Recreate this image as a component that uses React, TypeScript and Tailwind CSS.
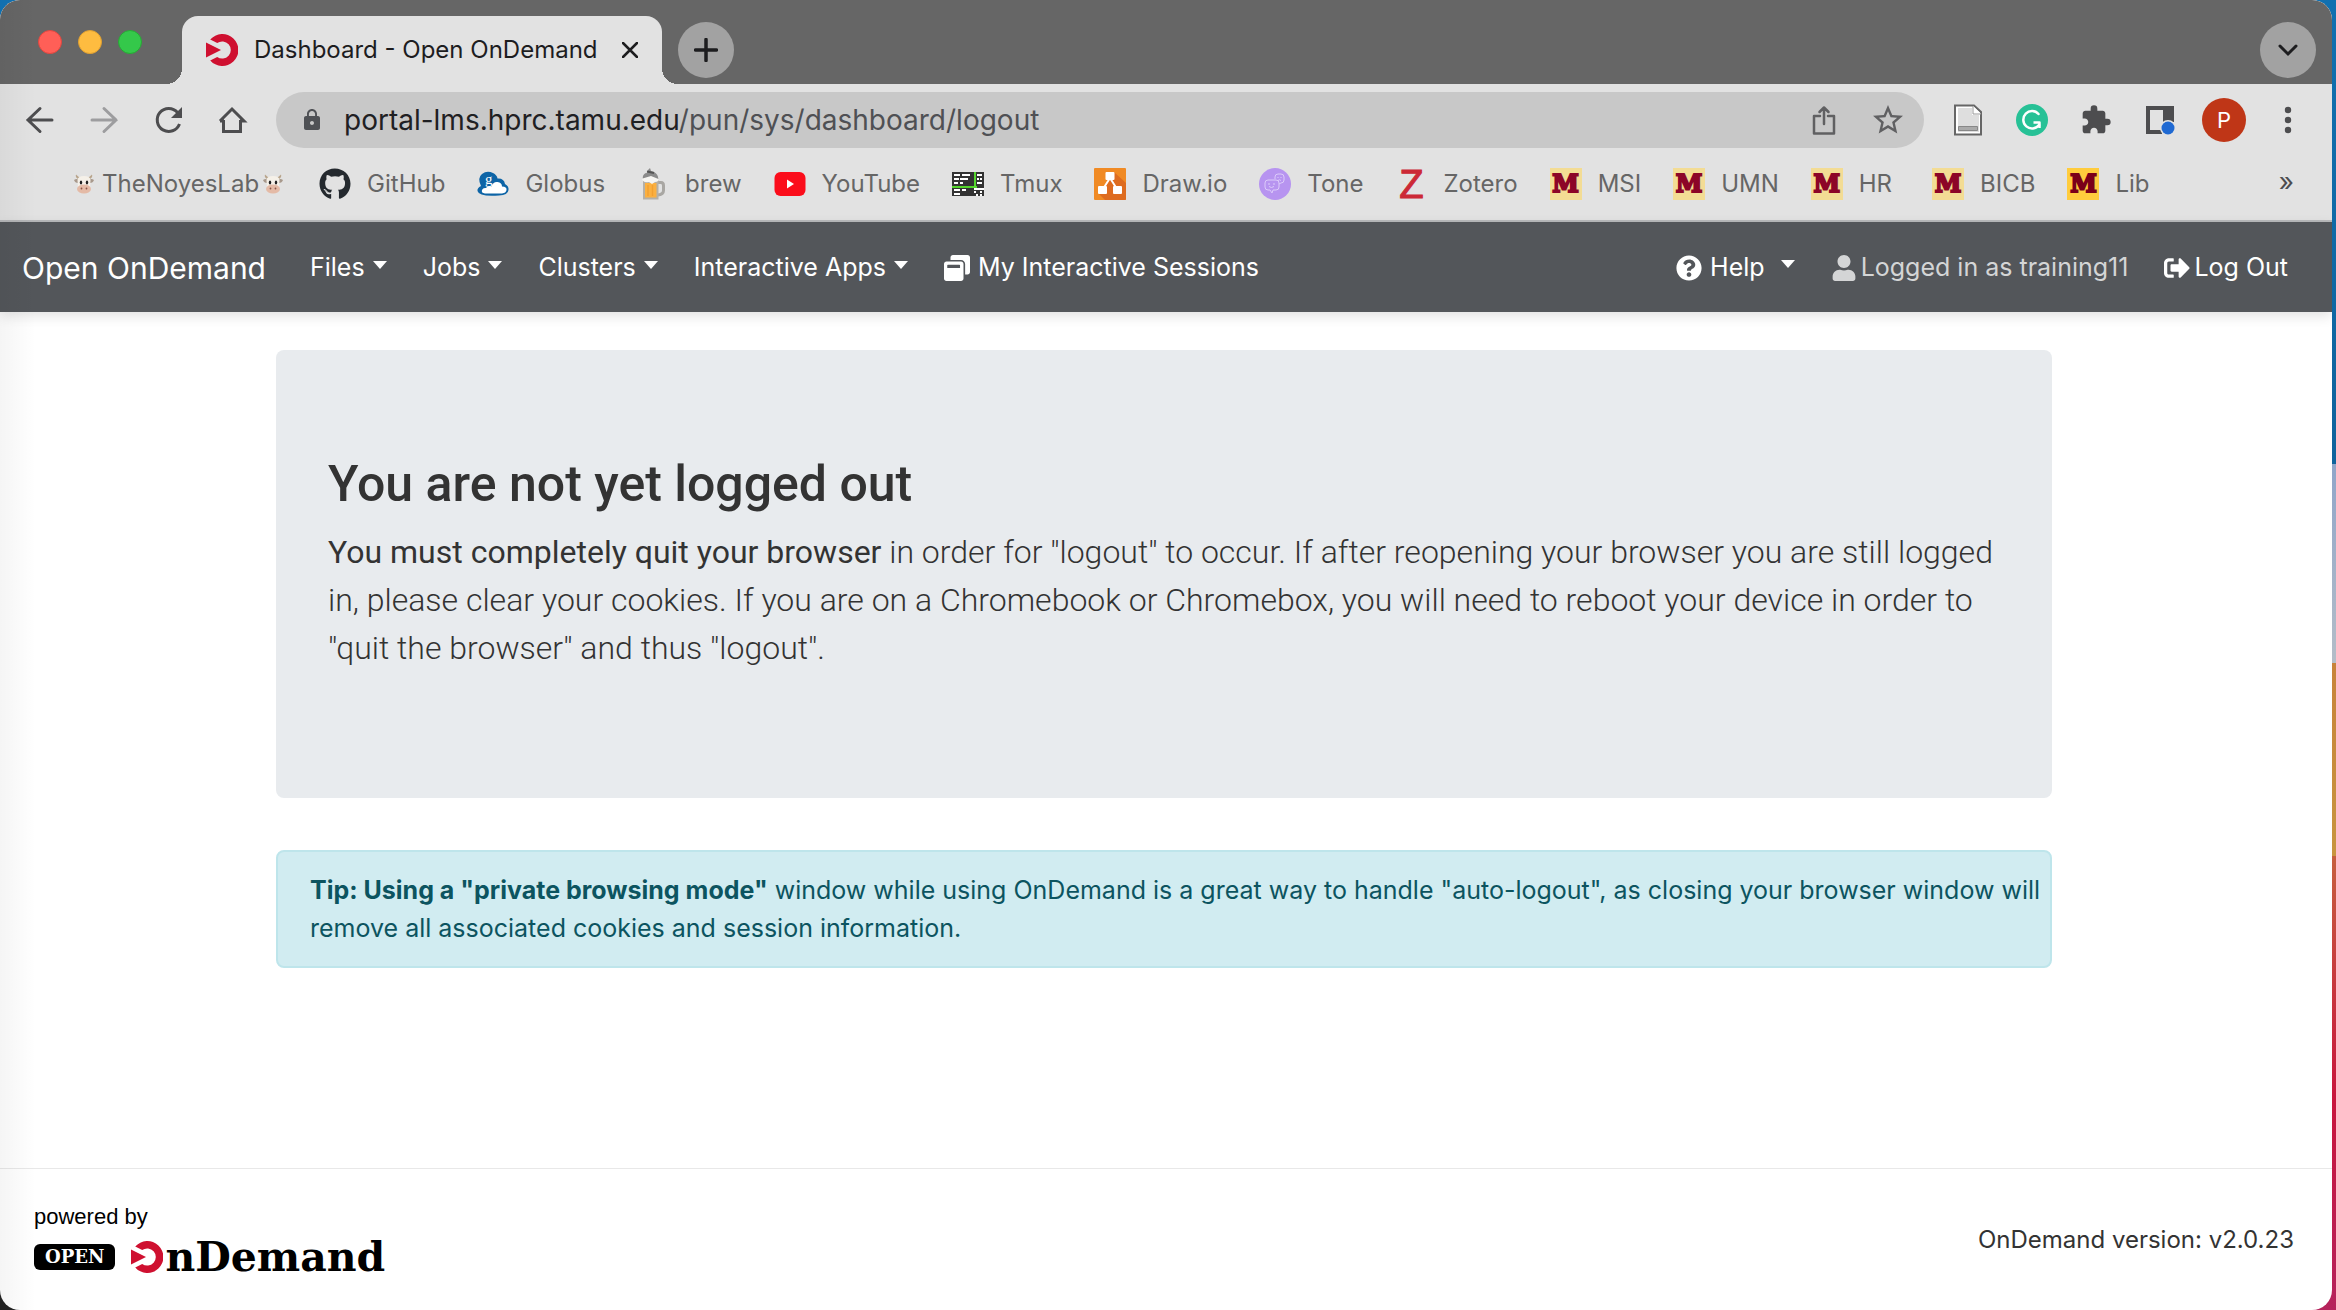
import React from "react";
import { FaGithub, FaQuestionCircle, FaUser, FaSignOutAlt, FaWindowRestore } from "react-icons/fa";
import { MdExtension, MdStarBorder, MdLock } from "react-icons/md";

function OnDemandMark({ className }: { className: string }) {
  return (
    <svg viewBox="0 0 32 32" className={className} aria-hidden="true">
      <path
        d="M4.2 5.6A16 16 0 1 1 4.2 26.4L11.2 23A8.6 8.6 0 1 0 11.2 9Z"
        fill="#cf1030"
      />
      <path d="M0 8.6L15 16L0 23.4Z" fill="#cf1030" />
    </svg>
  );
}

function Cow() {
  return (
    <svg viewBox="0 0 20 20" className="size-5" aria-hidden="true">
      <path d="M4 5Q1 3 2 .5Q4 3 7 3.500ZM16 5Q19 3 18 .5Q16 3 13 3.500Z" fill="#b9a58c" />
      <path d="M0 6Q3 4 5 6L4 9Q1 9 0 6ZM20 6Q17 4 15 6L16 9Q19 9 20 6Z" fill="#a8998c" />
      <path d="M3.500 6Q4 2 10 2Q16 2 16.500 6L16 14H4Z" fill="#f5f0e8" />
      <ellipse cx="10" cy="15" rx="7" ry="4.600" fill="#e4baa6" />
      <ellipse cx="7" cy="8.500" rx="1.200" ry="1.900" fill="#222" />
      <ellipse cx="13" cy="8.500" rx="1.200" ry="1.900" fill="#222" />
      <ellipse cx="7.500" cy="14.500" rx=".9" ry="1.100" fill="#8a5647" />
      <ellipse cx="12.500" cy="14.500" rx=".9" ry="1.100" fill="#8a5647" />
    </svg>
  );
}

function GlobusIcon() {
  return (
    <svg viewBox="0 0 32 32" className="size-8" aria-hidden="true">
      <path
        d="M4 18Q0 10 5 6Q10 2 16 5Q20 7 20.500 10.500Q27 10 28 16Q32 18 31.500 22Q31 27 22 27.500Q2 29 .5 23Q0 20 4 18Z"
        fill="#0d64a6"
      />
      <path
        d="M8 25.500Q4 25 5 22Q6 19.500 9 20Q11 17 14.500 18.500Q16 13.500 20.500 14Q25 14.500 25 18.500Q30 18.500 29.500 22Q29 25 25 25.500Z"
        fill="#fff"
      />
      <text x="8" y="16" fontSize="15" fontFamily="Liberation Serif, serif" fill="#fff">g</text>
    </svg>
  );
}

function BrewIcon() {
  return (
    <svg viewBox="0 0 32 32" className="size-8" aria-hidden="true">
      <path d="M20 14.500h4q2.500 0 2.500 3v5q0 4-6 4.500" fill="none" stroke="#a9a7a3" strokeWidth="3" />
      <path d="M6 10h15.500v21.500H6Z" fill="#b4b0a8" />
      <path d="M8 15h11.500v14.500H8Z" fill="#fbb040" />
      <path d="M11 17v11M15.500 17v11" stroke="#f2a030" strokeWidth="1.500" />
      <path d="M5 10Q6 6 12 6.500Q19 5.500 22 10Q22 14 18 14L15 16L12 14Q5 15 5 10Z" fill="#f6f5f2" />
      <path d="M5.500 10.500Q6 5 10 5L11 2L13 0L14 3L17 4Q21 6 21.500 11L14 8Z" fill="#8b8b8b" />
      <path d="M10 3.500L17 5" stroke="#555" strokeWidth="2" />
    </svg>
  );
}

function YouTubeIcon() {
  return (
    <svg viewBox="0 0 32 32" className="size-8" aria-hidden="true">
      <rect x="0.500" y="4" width="31" height="24" rx="6" fill="#fb0d1b" />
      <path d="M13 11.500L20 16L13 20.500Z" fill="#fff" />
    </svg>
  );
}

function TmuxIcon() {
  return (
    <svg viewBox="0 0 32 32" className="size-8" aria-hidden="true">
      <rect y="4" width="32" height="24" fill="#333" />
      <path
        d="M2 7h6M10 7h8M2 11h5M8 11h8M2 15h4M8 15h3M2 22h6M10 22h4M2 26h6M25 7h5M25 11h2M28 11h2M25 15h5M22 21h10M22 24h2M28 24h2M24 27h2M28 27h2"
        stroke="#fff"
        strokeWidth="2"
      />
      <path d="M23 4V20M0 19H25" stroke="#54d62c" strokeWidth="2" />
    </svg>
  );
}

function DrawioIcon() {
  return (
    <svg viewBox="0 0 32 32" className="size-8" aria-hidden="true">
      <rect width="32" height="32" rx="1" fill="#f08a24" />
      <path d="M20 4L32 15V31Q32 32 31 32H11L5 26L14 12Z" fill="#de6c20" />
      <path d="M16 10L9 21M16 10L23 21" stroke="#fff" strokeWidth="2" />
      <rect x="11.500" y="4" width="9" height="8" rx="1" fill="#fff" />
      <rect x="4" y="18" width="9" height="8" rx="1" fill="#fff" />
      <rect x="19" y="18" width="9" height="8" rx="1" fill="#fff" />
    </svg>
  );
}

function ToneIcon() {
  return (
    <svg viewBox="0 0 32 32" className="size-8" aria-hidden="true">
      <circle cx="16" cy="16" r="16" fill="#b794f0" />
      <g fill="none" stroke="#dccbf9" strokeWidth="1">
        <path d="M9 12h8q3 0 3 3v4q0 3-3 3h-3l-1 3l-2-3h-2q-3 0-3-3v-4q0-3 3-3Z" />
        <path d="M16 11V9q0-3 3-3h3q3 0 3 3v3q0 3-3 3l-2 1" />
        <path d="M10 15v2M15 15v2M10 18.500q2.500 2 5 0M19 9v1M22 9v1M19 12.500q1.500-1.500 3 0" />
      </g>
    </svg>
  );
}

function ZoteroIcon() {
  return (
    <span className="flex size-8 items-center justify-center font-['Liberation_Sans'] text-[40px] leading-8 text-[#cc2936] [-webkit-text-stroke:1px]" aria-hidden="true">
      Z
    </span>
  );
}

function PaleM() {
  return (
    <span className="flex size-8 items-center justify-center bg-[#f3dc94] font-['DejaVu_Serif'] text-[24px] leading-8 font-bold text-[#8c0527] [-webkit-text-stroke:2px]" aria-hidden="true">
      M
    </span>
  );
}

function GoldM() {
  return (
    <span className="flex size-8 items-center justify-center bg-[#ffcc3d] font-['DejaVu_Serif'] text-[24px] leading-8 font-bold text-[#7a0019] [-webkit-text-stroke:2px]" aria-hidden="true">
      M
    </span>
  );
}

const bookmarks: { label: string; icon: React.ReactNode; wide?: boolean }[] = [
  { label: "GitHub", icon: <FaGithub className="size-8 text-[#24292e]" /> },
  { label: "Globus", icon: <GlobusIcon /> },
  { label: "brew", icon: <BrewIcon /> },
  { label: "YouTube", icon: <YouTubeIcon /> },
  { label: "Tmux", icon: <TmuxIcon /> },
  { label: "Draw.io", icon: <DrawioIcon /> },
  { label: "Tone", icon: <ToneIcon /> },
  { label: "Zotero", icon: <ZoteroIcon /> },
  { label: "MSI", icon: <PaleM /> },
  { label: "UMN", icon: <PaleM /> },
  { label: "HR", icon: <PaleM />, wide: true },
  { label: "BICB", icon: <PaleM /> },
  { label: "Lib", icon: <GoldM /> },
];

function TabStrip() {
  return (
    <div className="flex h-21 items-end bg-[#666] pr-4">
      <div className="flex h-21 w-[166px] shrink-0 items-center gap-4 pl-[38px]">
        <button aria-label="Close window" className="size-6 rounded-full border border-[#e2463f] bg-[#ff5f57]" />
        <button aria-label="Minimize window" className="size-6 rounded-full border border-[#e0a030] bg-[#febc40]" />
        <button aria-label="Zoom window" className="size-6 rounded-full border border-[#27a835] bg-[#34c84a]" />
      </div>
      <div className="size-4 bg-[radial-gradient(circle_at_top_left,transparent_16px,#e2e2e2_16px)]" />
      <div className="flex h-[68px] w-[480px] items-center rounded-t-2xl bg-[#e2e2e2] pl-6">
        <OnDemandMark className="size-8" />
        <span className="ml-4 flex-1 text-[24px] whitespace-nowrap text-[#1d1d1f]">Dashboard - Open OnDemand</span>
        <button aria-label="Close tab" className="mr-5 p-1">
          <svg viewBox="0 0 16 16" className="size-4" aria-hidden="true">
            <path d="M1 1L15 15M15 1L1 15" stroke="#1d1d1f" strokeWidth="2.500" strokeLinecap="round" />
          </svg>
        </button>
      </div>
      <div className="size-4 bg-[radial-gradient(circle_at_top_right,transparent_16px,#e2e2e2_16px)]" />
      <button aria-label="New tab" className="mb-[6px] flex size-14 items-center justify-center rounded-full bg-[#a2a2a2]">
        <svg viewBox="0 0 24 24" className="size-6" aria-hidden="true">
          <path d="M12 1.500V22.500M1.500 12H22.500" stroke="#1d1d1f" strokeWidth="3.500" strokeLinecap="round" />
        </svg>
      </button>
      <button aria-label="Search tabs" className="mb-[6px] ml-auto flex size-14 items-center justify-center rounded-full bg-[#a2a2a2]">
        <svg viewBox="0 0 20 20" className="size-5" aria-hidden="true">
          <path d="M2 6L10 14L18 6" stroke="#1d1d1f" strokeWidth="3" fill="none" strokeLinecap="round" />
        </svg>
      </button>
    </div>
  );
}

function Toolbar() {
  return (
    <div className="flex h-18 items-center pr-7 pl-6 text-[#4d4d4f]">
      <div className="flex items-center gap-8">
        <button aria-label="Back" className="size-8">
          <svg viewBox="0 0 32 32" className="size-8" fill="none" stroke="currentColor" strokeWidth="3" strokeLinecap="round">
            <path d="M4 16H28M16 4.500L4 16L16 27.500" />
          </svg>
        </button>
        <button aria-label="Forward" className="size-8 text-[#9d9d9f]">
          <svg viewBox="0 0 32 32" className="size-8" fill="none" stroke="currentColor" strokeWidth="3" strokeLinecap="round">
            <path d="M4 16H28M16 4.500L28 16L16 27.500" />
          </svg>
        </button>
        <button aria-label="Reload" className="size-8">
          <svg viewBox="0 0 32 32" className="size-8">
            <path d="M27.500 20A11.500 11.500 0 1 1 25.500 8.500" fill="none" stroke="currentColor" strokeWidth="3" />
            <path d="M30 3V14H19Z" fill="currentColor" />
          </svg>
        </button>
        <button aria-label="Home" className="size-8">
          <svg viewBox="0 0 32 32" className="size-8" fill="none" stroke="currentColor" strokeWidth="3">
            <path d="M7.500 16V27.500H24.500V16M4 17L16 5L28 17H24M4 17H8" />
          </svg>
        </button>
      </div>
      <div className="ml-7 flex h-14 flex-1 items-center rounded-full bg-[#c8c8c8] pr-5 pl-6">
        <MdLock className="size-6 shrink-0 text-[#4f5155]" />
        <div role="textbox" aria-label="Address" className="ml-5 flex-1 text-[28px] leading-10 text-[#4f5054]">
          <span className="text-[#1f2023]">portal-lms.hprc.tamu.edu</span>/pun/sys/dashboard/logout
        </div>
        <button aria-label="Share" className="mr-8 size-8 text-[#606062]">
          <svg viewBox="0 0 32 32" className="size-8" fill="none" stroke="currentColor" strokeWidth="2.500" strokeLinecap="round" strokeLinejoin="round">
            <path d="M12 12H6V29.500H26V12H20M16 20V4M11.500 8L16 3.500L20.500 8" />
          </svg>
        </button>
        <button aria-label="Bookmark this page" className="flex size-8 items-center justify-center text-[#606062]">
          <MdStarBorder className="size-9 shrink-0" />
        </button>
      </div>
      <div className="ml-7 flex items-center gap-8">
        <button aria-label="Reader extension" className="size-8">
          <svg viewBox="0 0 32 32" className="size-8">
            <path d="M3 1.500H22L29 8V30.500H3Z" fill="#fff" stroke="#666" strokeWidth="2" />
            <path d="M6 4H20V11H27V28H6Z" fill="#dedede" />
            <path d="M21 2V10H29" fill="#fff" stroke="#999" strokeWidth="1" />
            <path d="M6.500 22.500H25.500V26.500H6.500Z" fill="#aaa" stroke="#888" />
          </svg>
        </button>
        <button aria-label="Grammarly" className="size-8">
          <svg viewBox="0 0 32 32" className="size-8" fill="none" stroke="#fff" strokeWidth="2.500">
            <circle cx="16" cy="16" r="16" fill="#27c196" stroke="none" />
            <path d="M22.500 10A8.700 8.700 0 1 0 23 21" strokeLinecap="round" />
            <path d="M17.500 18.500H23.500V24" strokeLinejoin="round" />
          </svg>
        </button>
        <button aria-label="Extensions" className="size-8">
          <MdExtension className="size-8" />
        </button>
        <button aria-label="Side panel" className="size-8">
          <svg viewBox="0 0 32 32" className="size-8">
            <path d="M2 2H30V18H18V30H2Z" fill="#4d4d4f" />
            <path d="M6 6H19V26H6Z" fill="#e2e2e2" />
            <circle cx="24" cy="24" r="8" fill="#e2e2e2" />
            <circle cx="24" cy="24" r="6.500" fill="#1f69d2" />
          </svg>
        </button>
        <button aria-label="Profile" className="-mx-[6px] flex size-11 items-center justify-center rounded-full bg-[#bf3617] text-[22px] text-white">
          P
        </button>
        <button aria-label="Menu" className="size-8">
          <svg viewBox="0 0 32 32" className="size-8" fill="currentColor">
            <circle cx="16" cy="6" r="3.200" />
            <circle cx="16" cy="16" r="3.200" />
            <circle cx="16" cy="26" r="3.200" />
          </svg>
        </button>
      </div>
    </div>
  );
}

function BookmarksBar() {
  return (
    <nav aria-label="Bookmarks" className="flex h-16 items-start pt-3 pr-[38px] pl-[74px] text-[24px] leading-8 text-[#666]">
      <div className="flex items-center gap-8">
        <a href="#lab" className="mr-1 flex items-center gap-1">
          <Cow />
          <span className="pl-1">TheNoyesLab</span>
          <Cow />
        </a>
        {bookmarks.map((b) => (
          <a key={b.label} href={"#" + b.label} className={b.wide ? "mr-2 flex items-center gap-4" : "flex items-center gap-4"}>
            {b.icon}
            <span>{b.label}</span>
          </a>
        ))}
      </div>
      <button aria-label="More bookmarks" className="ml-auto text-[26px] leading-7 text-[#4d4d4f]">»</button>
    </nav>
  );
}

function Caret() {
  return <span className="mb-2 ml-2 inline-block border-x-[7px] border-t-8 border-x-transparent border-t-white align-middle" />;
}

function SiteNav() {
  return (
    <nav aria-label="Main" className="flex h-[90px] items-center bg-[#53565a] pt-[2px] pr-11 pl-[22px] text-[25px] whitespace-nowrap text-white shadow-[0_4px_12px_rgba(0,0,0,0.12)]">
      <a href="#home" className="mr-11 text-[30px]">Open OnDemand</a>
      <div className="flex items-center gap-9">
        <button>Files<Caret /></button>
        <button>Jobs<Caret /></button>
        <button>Clusters<Caret /></button>
        <button>Interactive Apps<Caret /></button>
        <a href="#sessions" className="flex items-center gap-2"><FaWindowRestore className="size-[26px]" />My Interactive Sessions</a>
      </div>
      <div className="ml-auto flex items-center gap-9">
        <button className="flex items-center gap-2"><FaQuestionCircle className="size-[26px]" />Help <Caret /></button>
        <span className="flex items-center gap-1 text-[#d4d5d6]"><FaUser className="size-[26px]" />Logged in as training11</span>
        <a href="#logout" className="flex items-center gap-1"><FaSignOutAlt className="size-[26px]" />Log Out</a>
      </div>
    </nav>
  );
}

export default function App() {
  return (
    <div className="flex min-h-screen bg-[radial-gradient(circle_at_bottom_left,#222_20px,transparent_21px),linear-gradient(#1170b0_0,#0f639c_464px,#90a5c9_464px,#b4bdc8_663px,#c8833a_663px,#c8953f_856px,#c65f3e_856px,#c8153d_1100px,#b5235c_1310px)] font-['Inter',sans-serif]">
      <div className="relative mr-1 flex flex-1 flex-col overflow-hidden rounded-[20px] bg-white">
        <header className="bg-[#e2e2e2]">
          <TabStrip />
          <Toolbar />
          <BookmarksBar />
          <div className="h-[2px] bg-[#b9babc]" />
        </header>
        <SiteNav />
        <main className="mr-[280px] ml-[276px] flex-1 pt-[38px] text-[#333]">
          <section className="rounded-lg bg-[#e8ebee] px-[52px] pt-[104px] pb-[126px] font-['Roboto',sans-serif]">
            <h1 className="mb-[14px] text-[50px] leading-[60px] font-medium">You are not yet logged out</h1>
            <p className="text-[32px] leading-[48px] font-light">
              <strong className="font-normal">You must completely quit your browser</strong> in order for "logout" to occur. If after
              reopening your browser you are still logged in, please clear your cookies. If you are on a Chromebook or Chromebox, you
              will need to reboot your device in order to "quit the browser" and thus "logout".
            </p>
          </section>
          <section role="alert" className="mt-[52px] rounded-lg border-2 border-[#bee5eb] bg-[#d1ecf1] py-[19px] pr-1 pl-8 text-[25px] leading-[38px] text-[#0c5460]">
            <strong className="font-bold">Tip: Using a "private browsing mode"</strong> window while using OnDemand is a great way to
            handle "auto-logout", as closing your browser window will remove all associated cookies and session information.
          </section>
        </main>
        <footer className="flex h-[142px] items-center justify-between border-t border-[#e8e8e8] pr-[38px] pl-[34px]">
          <a href="#ondemand" className="mb-[2px] block text-black">
            <span className="block font-['Liberation_Sans'] text-[22px] leading-7">powered by</span>
            <span className="mt-2 flex items-center">
              <span className="mr-4 flex h-[26px] items-center rounded-md bg-black px-[11px] font-['DejaVu_Serif'] text-[18px] font-bold text-white">OPEN</span>
              <OnDemandMark className="size-8" />
              <span className="ml-[2px] font-['DejaVu_Serif'] text-[41px] leading-9 font-bold">nDemand</span>
            </span>
          </a>
          <span className="text-[24px] text-[#333]">OnDemand version: v2.0.23</span>
        </footer>
        <div className="pointer-events-none absolute inset-y-0 left-0 w-9 bg-linear-to-r from-black/4 to-transparent" />
      </div>
    </div>
  );
}
